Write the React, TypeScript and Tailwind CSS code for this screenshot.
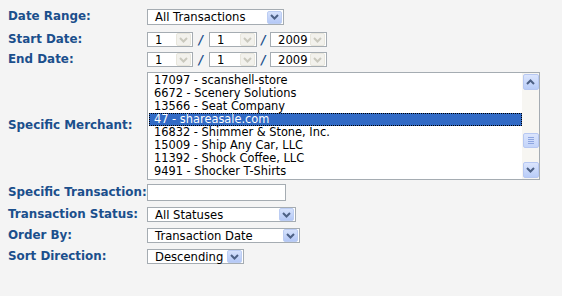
import React from "react";

const F = { fontFamily: '"DejaVu Sans", Verdana, sans-serif' };

function Btn({ disabled = false }: { disabled?: boolean }) {
  return (
    <div
      className={
        "w-[15px] h-[13px] shrink-0 flex items-center justify-center rounded-[2px] border " +
        (disabled
          ? "bg-[#f2f1ec] border-[#e8e6dc]"
          : "bg-gradient-to-b from-[#d6e2fc] to-[#b4c8f6] border-[#bccdf3]")
      }
    >
      <svg width="9" height="6" viewBox="0 0 9 6">
        <path
          d="M1 1 L4.5 4.5 L8 1"
          fill="none"
          stroke={disabled ? "#c9c8bd" : "#4d6185"}
          strokeWidth="2"
        />
      </svg>
    </div>
  );
}

function Select({
  text,
  w,
  h = 15,
  disabled = false,
}: {
  text: string;
  w: string;
  h?: number;
  disabled?: boolean;
}) {
  return (
    <div
      className={
        "flex items-center justify-between border border-[#a5acb2] bg-white pl-[7px] pr-[1px] text-[11.6px] leading-[13px] text-black " +
        w +
        (h === 16 ? " h-[16px]" : " h-[15px]")
      }
      style={F}
    >
      <span className="whitespace-nowrap pt-[1px]">{text}</span>
      <Btn disabled={disabled} />
    </div>
  );
}

function Label({ children }: { children: React.ReactNode }) {
  return (
    <div
      className="w-[147px] shrink-0 pl-[8px] text-[11.9px] font-bold text-[#1b4f8c] whitespace-nowrap"
      style={F}
    >
      {children}
    </div>
  );
}

const Slash = ({ w }: { w: string }) => (
  <span className={"text-center text-[12px] font-bold italic text-[#1b4f8c] " + w} style={F}>
    /
  </span>
);

const merchants = [
  "17097 - scanshell-store",
  "6672 - Scenery Solutions",
  "13566 - Seat Company",
  "47 - shareasale.com",
  "16832 - Shimmer & Stone, Inc.",
  "15009 - Ship Any Car, LLC",
  "11392 - Shock Coffee, LLC",
  "9491 - Shocker T-Shirts",
];

function SbBtn({ up }: { up?: boolean }) {
  return (
    <div className="h-[16px] w-[16px] rounded-[2px] border border-[#b7c8f2] bg-gradient-to-b from-[#dbe5fd] to-[#b9cdf8] flex items-center justify-center">
      <svg width="9" height="6" viewBox="0 0 9 6">
        <path
          d={up ? "M1 5 L4.5 1.5 L8 5" : "M1 1 L4.5 4.5 L8 1"}
          fill="none"
          stroke="#4d6185"
          strokeWidth="2"
        />
      </svg>
    </div>
  );
}

function DateRow({ label, mt }: { label: string; mt: string }) {
  return (
    <div className={"flex items-center h-[15px] " + mt}>
      <Label>{label}</Label>
      <Select text="1" w="w-[46px]" disabled />
      <Slash w="w-[16px]" />
      <Select text="1" w="w-[48px]" disabled />
      <Slash w="w-[13px]" />
      <Select text="2009" w="w-[57px]" disabled />
    </div>
  );
}

export default function App() {
  return (
    <div className="w-[562px] h-[296px] bg-[#f4f4f4] pt-[9px]">
      <div className="flex items-center h-[16px]">
        <Label>Date Range:</Label>
        <Select text="All Transactions" w="w-[137px]" h={16} />
      </div>
      <DateRow label="Start Date:" mt="mt-[7px]" />
      <DateRow label="End Date:" mt="mt-[5px]" />
      <div className="flex items-center h-[108px] mt-[5px]">
        <Label>Specific Merchant:</Label>
        <div className="w-[393px] h-[108px] border border-[#a5acb2] bg-white flex">
          <div className="flex-1 pt-[1px] pl-[1px]" style={F}>
            {merchants.map((m, i) => (
              <div
                key={m}
                className={
                  "h-[13px] leading-[13px] text-[11.4px] pl-[5px] whitespace-nowrap " +
                  (i === 3
                    ? "bg-[#316ac5] text-white outline-1 outline-dotted outline-black -outline-offset-1"
                    : "text-black")
                }
              >
                {m}
              </div>
            ))}
          </div>
          <div className="w-[17px] bg-[#f7f6f2] flex flex-col items-center pt-[1px] pb-[1px]">
            <SbBtn up />
            <div className="flex-1 w-full flex flex-col items-center justify-end pb-[14px]">
              <div className="h-[15px] w-[16px] rounded-[2px] border border-[#b7c8f2] bg-gradient-to-b from-[#dbe5fd] to-[#c3d4f9] flex flex-col items-center justify-center gap-[1px]">
                <div className="w-[6px] h-[1px] bg-[#8ea6e0]" />
                <div className="w-[6px] h-[1px] bg-[#8ea6e0]" />
                <div className="w-[6px] h-[1px] bg-[#8ea6e0]" />
                <div className="w-[6px] h-[1px] bg-[#8ea6e0]" />
              </div>
            </div>
            <SbBtn />
          </div>
        </div>
      </div>
      <div className="flex items-center h-[17px] mt-[4px]">
        <Label>Specific Transaction:</Label>
        <div className="w-[139px] h-[17px] border border-[#a5acb2] bg-white" />
      </div>
      <div className="flex items-center h-[15px] mt-[6px]">
        <Label>Transaction Status:</Label>
        <Select text="All Statuses" w="w-[149px]" />
      </div>
      <div className="flex items-center h-[15px] mt-[6px]">
        <Label>Order By:</Label>
        <Select text="Transaction Date" w="w-[153px]" />
      </div>
      <div className="flex items-center h-[15px] mt-[6px]">
        <Label>Sort Direction:</Label>
        <Select text="Descending" w="w-[97px]" />
      </div>
    </div>
  );
}
